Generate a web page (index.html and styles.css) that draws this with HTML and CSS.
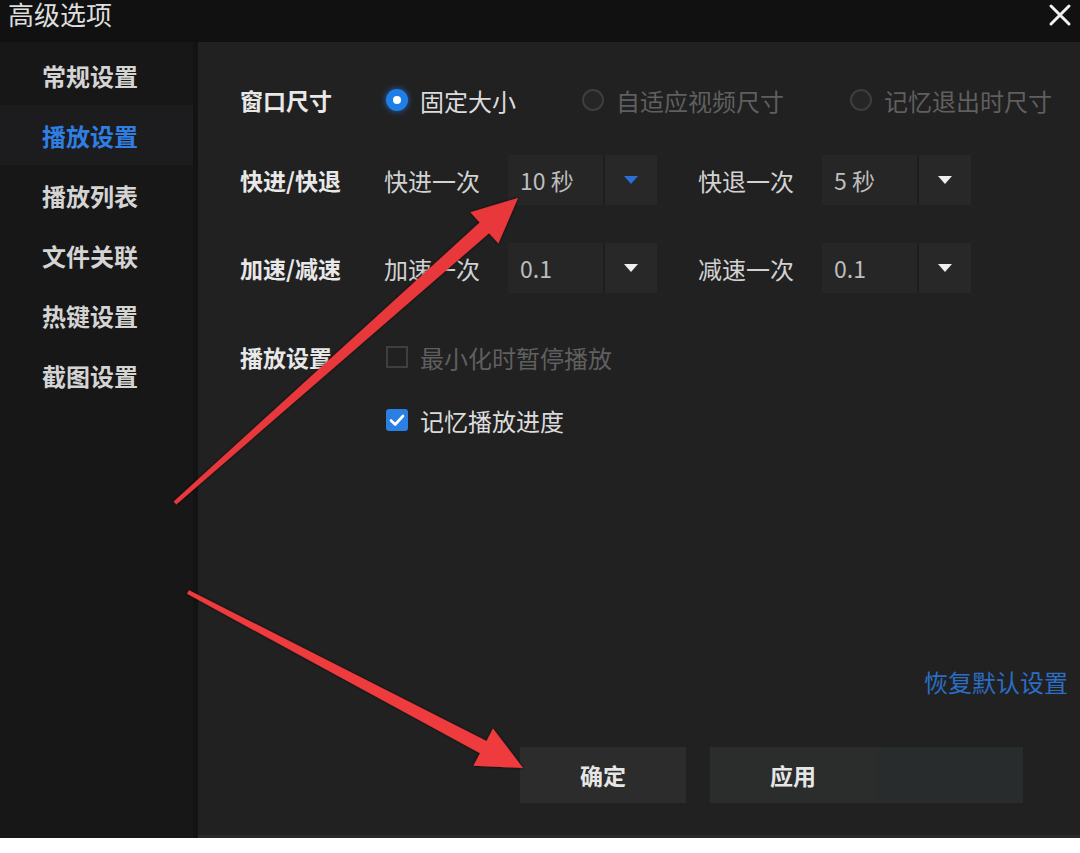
FILE: index.html
```html
<!DOCTYPE html>
<html lang="zh-CN">
<head>
<meta charset="utf-8">
<title>高级选项</title>
<link rel="stylesheet" href="styles.css">
</head>
<body>
<div class="dialog">
  <div class="titlebar">
    <div class="title">高级选项</div>
    <svg class="close" width="24" height="24" viewBox="0 0 24 24"><path d="M3 3 L21 21 M21 3 L3 21" stroke="#f0f0f0" stroke-width="3" stroke-linecap="round"/></svg>
  </div>
  <div class="main">
    <nav class="sidebar">
      <div class="nav-item">常规设置</div>
      <div class="nav-item active">播放设置</div>
      <div class="nav-item">播放列表</div>
      <div class="nav-item">文件关联</div>
      <div class="nav-item">热键设置</div>
      <div class="nav-item">截图设置</div>
    </nav>
    <section class="content">
      <div class="row r1">
        <div class="label">窗口尺寸</div>
        <div class="radios">
          <div class="radio-item"><span class="radio on"></span><span class="opt">固定大小</span></div>
          <div class="radio-item"><span class="radio off"></span><span class="opt dim">自适应视频尺寸</span></div>
          <div class="radio-item"><span class="radio off"></span><span class="opt dim">记忆退出时尺寸</span></div>
        </div>
      </div>
      <div class="row r2">
        <div class="label">快进/快退</div>
        <div class="pair">
          <span class="sub">快进一次</span>
          <div class="select"><span class="val">10 秒</span><span class="arrow-box"><span class="tri blue"></span></span></div>
        </div>
        <div class="pair">
          <span class="sub">快退一次</span>
          <div class="select"><span class="val">5 秒</span><span class="arrow-box"><span class="tri"></span></span></div>
        </div>
      </div>
      <div class="row r3">
        <div class="label">加速/减速</div>
        <div class="pair">
          <span class="sub">加速一次</span>
          <div class="select"><span class="val">0.1</span><span class="arrow-box"><span class="tri"></span></span></div>
        </div>
        <div class="pair">
          <span class="sub">减速一次</span>
          <div class="select"><span class="val">0.1</span><span class="arrow-box"><span class="tri"></span></span></div>
        </div>
      </div>
      <div class="row r4">
        <div class="label">播放设置</div>
        <div class="check-item"><span class="checkbox off"></span><span class="opt dim">最小化时暂停播放</span></div>
      </div>
      <div class="row r5">
        <div class="label"></div>
        <div class="check-item"><span class="checkbox on"><svg width="22" height="22" viewBox="0 0 22 22"><path d="M5 11.5 L9.2 15.5 L17 7" fill="none" stroke="#fff" stroke-width="2.6" stroke-linecap="round" stroke-linejoin="round"/></svg></span><span class="opt">记忆播放进度</span></div>
      </div>
      <div class="spacer"></div>
      <div class="restore-row"><a class="restore">恢复默认设置</a></div>
      <div class="buttons">
        <div class="btn">确定</div>
        <div class="btn">应用</div>
        <div class="btn-ghost"></div>
      </div>
    </section>
  </div>
  <svg class="annot" width="1080" height="853" viewBox="0 0 1080 853">
    <defs>
      <filter id="sh" x="-10%" y="-10%" width="120%" height="120%">
        <feDropShadow dx="0" dy="0" stdDeviation="1.6" flood-color="#000" flood-opacity="0.8"/>
      </filter>
    </defs>
    <polygon filter="url(#sh)" fill="#e9383b" points="176.3,504.5 489.1,233.2 498.4,243.6 518,198 470.4,212.2 479.7,222.6 173.7,501.5"/>
    <polygon filter="url(#sh)" fill="#ee3a3c" points="187,593.8 480,753.3 473.4,765.7 523,768 493,728.5 486.5,740.9 189,590.2"/>
  </svg>
</div>
</body>
</html>
```
FILE: styles.css
```css
* { box-sizing: border-box; }
html, body {
  margin: 0;
  padding: 0;
  background: #ffffff;
}
body {
  font-family: "Noto Sans CJK SC", "Noto Sans", sans-serif;
  width: 1080px;
  height: 853px;
  overflow: hidden;
}
.dialog {
  position: relative;
  width: 1080px;
  height: 838px;
  display: flex;
  flex-direction: column;
  background: #121212;
}
.titlebar {
  height: 42px;
  flex: none;
  display: flex;
  justify-content: space-between;
  align-items: flex-start;
  background: #111111;
}
.title {
  padding-left: 8px;
  font-size: 26px;
  line-height: 28px;
  color: #dedede;
}
.close {
  margin-top: 3px;
  margin-right: 8px;
}
.main {
  flex: 1;
  display: flex;
  min-height: 0;
}
.sidebar {
  width: 198px;
  flex: none;
  background: #171717;
  border-right: 5px solid #131313;
  padding-top: 3px;
}
.nav-item {
  height: 60px;
  display: flex;
  align-items: center;
  padding-left: 42px;
  font-size: 24px;
  font-weight: 700;
  color: #d4d4d4;
}
.nav-item.active {
  background: #1c1c1e;
  color: #2f7fe3;
}
.content {
  flex: 1;
  display: flex;
  flex-direction: column;
  background: #212121;
  padding-top: 28px;
  padding-left: 42px;
  border-bottom: 3px solid #2a2a2a;
}
.row {
  display: flex;
  align-items: center;
  flex: none;
}
.r1 { height: 60px; }
.r2 { height: 50px; margin-top: 25px; }
.r3 { height: 50px; margin-top: 38px; }
.r4 { height: 50px; margin-top: 39px; }
.r5 { height: 50px; margin-top: 13px; }
.label {
  width: 144px;
  flex: none;
  font-size: 23px;
  font-weight: 700;
  color: #e8e8e8;
}
.radios {
  display: flex;
  align-items: center;
  gap: 64px;
}
.radio-item, .check-item {
  display: flex;
  align-items: center;
  gap: 12px;
}
.radio {
  width: 22px;
  height: 22px;
  border-radius: 50%;
  display: flex;
  align-items: center;
  justify-content: center;
  margin-left: 2px;
}
.radio.on {
  background: #1d7fe6;
  box-shadow: 0 0 6px rgba(40, 130, 255, 0.7);
}
.radio.on::after {
  content: "";
  width: 8px;
  height: 8px;
  border-radius: 50%;
  background: #ffffff;
}
.radio.off {
  border: 2px solid #3e3e3e;
  background: #262626;
}
.opt {
  font-size: 24px;
  color: #dcdcdc;
}
.opt.dim {
  color: #5f5f5f;
}
.pair {
  display: flex;
  align-items: center;
  margin-right: 41px;
}
.sub {
  width: 124px;
  font-size: 24px;
  color: #d2d2d2;
}
.select {
  display: flex;
  width: 149px;
  height: 50px;
  background: #262626;
}
.val {
  width: 97px;
  padding-left: 12px;
  display: flex;
  align-items: center;
  font-size: 23px;
  color: #bdbdbd;
  border-right: 2px solid #1e1e1e;
}
.arrow-box {
  flex: 1;
  display: flex;
  align-items: center;
  justify-content: center;
  background: #282828;
}
.tri {
  width: 0;
  height: 0;
  border-left: 7px solid transparent;
  border-right: 7px solid transparent;
  border-top: 8px solid #eeeeee;
}
.tri.blue {
  border-top-color: #2a6fd6;
}
.checkbox {
  width: 22px;
  height: 22px;
  margin-left: 2px;
  display: flex;
  align-items: center;
  justify-content: center;
}
.checkbox.off {
  border: 2px solid #3f3f3f;
}
.checkbox.on {
  background: #2a7fe3;
  border-radius: 3px;
}
.spacer { flex: 1; }
.restore-row {
  display: flex;
  justify-content: flex-end;
  padding-right: 12px;
}
.restore {
  font-size: 24px;
  line-height: 30px;
  color: #2c6dc6;
}
.buttons {
  display: flex;
  margin-top: 50px;
  margin-bottom: 32px;
  padding-left: 280px;
  height: 56px;
  flex: none;
}
.btn {
  width: 166px;
  height: 56px;
  display: flex;
  align-items: center;
  justify-content: center;
  background: #2c2c2c;
  font-size: 23px;
  font-weight: 700;
  color: #e6e6e6;
  margin-right: 24px;
}
.btn + .btn {
  margin-right: 0;
  background: #2b2d2d;
}
.btn-ghost {
  width: 147px;
  height: 56px;
  background: #282c2c;
}
.annot {
  position: absolute;
  left: 0;
  top: 0;
  pointer-events: none;
}
```
